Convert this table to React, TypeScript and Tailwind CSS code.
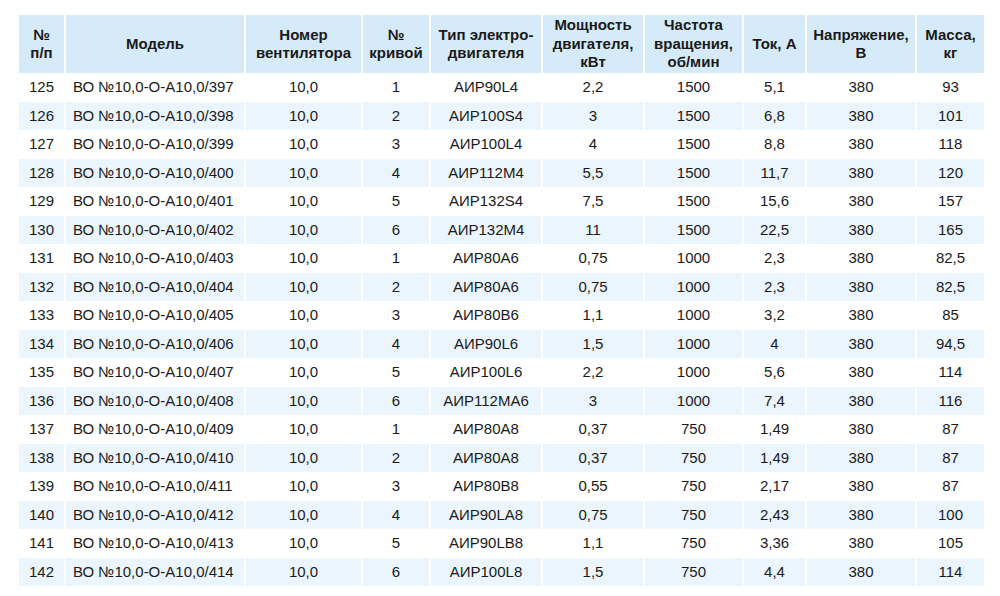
import React from "react";

const rows: string[][] = [
  ["125", "ВО №10,0-О-А10,0/397", "10,0", "1", "АИР90L4", "2,2", "1500", "5,1", "380", "93"],
  ["126", "ВО №10,0-О-А10,0/398", "10,0", "2", "АИР100S4", "3", "1500", "6,8", "380", "101"],
  ["127", "ВО №10,0-О-А10,0/399", "10,0", "3", "АИР100L4", "4", "1500", "8,8", "380", "118"],
  ["128", "ВО №10,0-О-А10,0/400", "10,0", "4", "АИР112М4", "5,5", "1500", "11,7", "380", "120"],
  ["129", "ВО №10,0-О-А10,0/401", "10,0", "5", "АИР132S4", "7,5", "1500", "15,6", "380", "157"],
  ["130", "ВО №10,0-О-А10,0/402", "10,0", "6", "АИР132М4", "11", "1500", "22,5", "380", "165"],
  ["131", "ВО №10,0-О-А10,0/403", "10,0", "1", "АИР80А6", "0,75", "1000", "2,3", "380", "82,5"],
  ["132", "ВО №10,0-О-А10,0/404", "10,0", "2", "АИР80А6", "0,75", "1000", "2,3", "380", "82,5"],
  ["133", "ВО №10,0-О-А10,0/405", "10,0", "3", "АИР80В6", "1,1", "1000", "3,2", "380", "85"],
  ["134", "ВО №10,0-О-А10,0/406", "10,0", "4", "АИР90L6", "1,5", "1000", "4", "380", "94,5"],
  ["135", "ВО №10,0-О-А10,0/407", "10,0", "5", "АИР100L6", "2,2", "1000", "5,6", "380", "114"],
  ["136", "ВО №10,0-О-А10,0/408", "10,0", "6", "АИР112МА6", "3", "1000", "7,4", "380", "116"],
  ["137", "ВО №10,0-О-А10,0/409", "10,0", "1", "АИР80А8", "0,37", "750", "1,49", "380", "87"],
  ["138", "ВО №10,0-О-А10,0/410", "10,0", "2", "АИР80А8", "0,37", "750", "1,49", "380", "87"],
  ["139", "ВО №10,0-О-А10,0/411", "10,0", "3", "АИР80В8", "0,55", "750", "2,17", "380", "87"],
  ["140", "ВО №10,0-О-А10,0/412", "10,0", "4", "АИР90LA8", "0,75", "750", "2,43", "380", "100"],
  ["141", "ВО №10,0-О-А10,0/413", "10,0", "5", "АИР90LB8", "1,1", "750", "3,36", "380", "105"],
  ["142", "ВО №10,0-О-А10,0/414", "10,0", "6", "АИР100L8", "1,5", "750", "4,4", "380", "114"],
];

const headers: React.ReactNode[] = [
  <>№<br />п/п</>,
  <>Модель</>,
  <>Номер<br />вентилятора</>,
  <>№<br />кривой</>,
  <>Тип электро-<br />двигателя</>,
  <>Мощность<br />двигателя,<br />кВт</>,
  <>Частота<br />вращения,<br />об/мин</>,
  <>Ток, А</>,
  <>Напряжение,<br />В</>,
  <>Масса,<br />кг</>,
];

export default function App() {
  return (
    <div
      className="w-[1000px] h-[596px] bg-white pt-[15px] pl-[19px] text-[#1a1a1a]"
      style={{ fontFamily: '"Liberation Sans", Arial, sans-serif' }}
    >
      <table className="w-[965px] table-fixed border-collapse text-[15px]">
        <colgroup>
          <col className="w-[46px]" />
          <col className="w-[180px]" />
          <col className="w-[117px]" />
          <col className="w-[68px]" />
          <col className="w-[112px]" />
          <col className="w-[102px]" />
          <col className="w-[99px]" />
          <col className="w-[63px]" />
          <col className="w-[110px]" />
          <col className="w-[68px]" />
        </colgroup>
        <thead>
          <tr className="h-[58px] bg-[#d6ebf9]">
            {headers.map((h, i) => (
              <th
                key={i}
                className={`p-0 text-center align-middle font-bold leading-[18.5px] ${i === 0 ? "" : "border-l-2 border-white"}`}
              >
                {h}
              </th>
            ))}
          </tr>
        </thead>
        <tbody>
          {rows.map((r, ri) => (
            <tr key={ri} className={`h-[28.5px] ${ri % 2 === 1 ? "bg-[#eaf5fe]" : "bg-white"}`}>
              {r.map((c, ci) => (
                <td
                  key={ci}
                  className={`p-0 align-middle leading-[18px] whitespace-nowrap ${ci === 1 ? "text-left pl-[7px]" : "text-center"} ${ci === 0 ? "" : "border-l-2 border-white"}`}
                >
                  {c}
                </td>
              ))}
            </tr>
          ))}
        </tbody>
      </table>
    </div>
  );
}
